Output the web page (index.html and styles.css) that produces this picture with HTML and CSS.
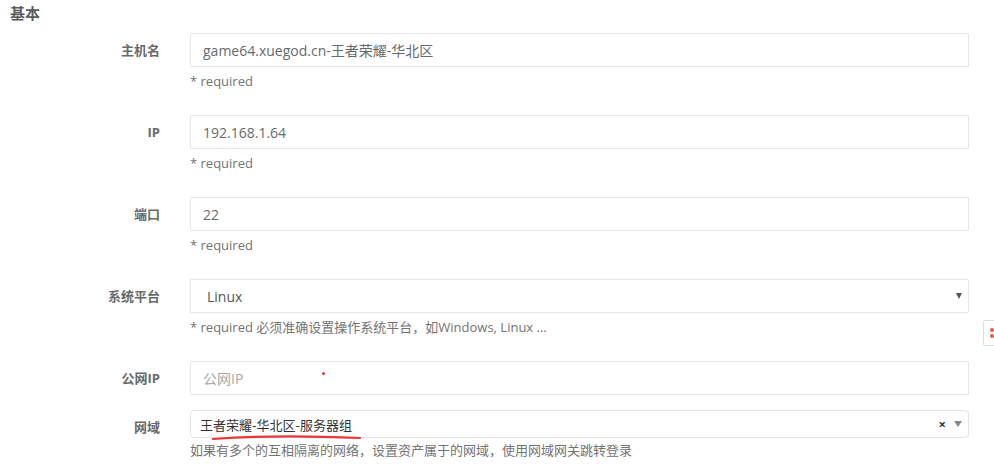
FILE: index.html
```html
<!DOCTYPE html>
<html>
<head>
<meta charset="utf-8">
<link rel="stylesheet" href="styles.css">
</head>
<body>
<div class="page">
  <h3 class="section-title">基本</h3>
  <form class="form">
    <div class="row">
      <label class="label">主机名</label>
      <div class="field">
        <input class="control" value="game64.xuegod.cn-王者荣耀-华北区">
        <div class="help">* required</div>
      </div>
    </div>
    <div class="row">
      <label class="label">IP</label>
      <div class="field">
        <input class="control" value="192.168.1.64">
        <div class="help">* required</div>
      </div>
    </div>
    <div class="row">
      <label class="label">端口</label>
      <div class="field">
        <input class="control" value="22">
        <div class="help">* required</div>
      </div>
    </div>
    <div class="row">
      <label class="label">系统平台</label>
      <div class="field">
        <div class="control select">
          <span class="select-value">Linux</span>
          <span class="caret-sm"></span>
        </div>
        <div class="help">* required 必须准确设置操作系统平台，如Windows, Linux ...</div>
      </div>
    </div>
    <div class="row row-nohelp">
      <label class="label">公网IP</label>
      <div class="field">
        <input class="control" placeholder="公网IP">
      </div>
    </div>
    <div class="row">
      <label class="label">网域</label>
      <div class="field">
        <div class="select2">
          <span class="select2-value">王者荣耀-华北区-服务器组</span>
          <span class="select2-clear">×</span>
          <span class="caret-sm caret-grey"></span>
        </div>
        <div class="help help-tight">如果有多个的互相隔离的网络，设置资产属于的网域，使用网域网关跳转登录</div>
      </div>
    </div>
  </form>
  <svg class="mark-line" width="150" height="8" viewBox="0 0 150 8">
    <path d="M1 5 C 40 2, 100 2, 148 4" stroke="#f0323a" stroke-width="2.2" fill="none" stroke-linecap="round"/>
  </svg>
  <span class="mark-dot"></span>
  <div class="side-tab">
    <span class="side-dot d1"></span>
    <span class="side-dot d2"></span>
  </div>
</div>
</body>
</html>
```
FILE: styles.css
```css
html, body {
  margin: 0;
  padding: 0;
  background: #ffffff;
}
body {
  font-family: "Open Sans", "Noto Sans CJK SC", sans-serif;
  font-size: 13px;
  color: #676a6c;
  overflow: hidden;
}
.page {
  position: relative;
  width: 994px;
  height: 476px;
}
.section-title {
  margin: 0;
  padding: 3px 0 0 10px;
  height: 30px;
  font-size: 15px;
  font-weight: 600;
  color: #5a5d60;
  line-height: 20px;
}
.form {
  display: flex;
  flex-direction: column;
}
.row {
  display: grid;
  grid-template-columns: 160px 779px;
  column-gap: 30px;
  margin-bottom: 15px;
}
.row-nohelp {
  margin-bottom: 15px;
}
.label {
  text-align: right;
  font-weight: 700;
  padding-top: 8px;
  line-height: 18px;
  color: #676a6c;
  font-size: 13px;
}
.field {
  display: flex;
  flex-direction: column;
}
.control {
  box-sizing: border-box;
  height: 34px;
  width: 779px;
  border: 1px solid #e5e6e7;
  border-radius: 1px;
  padding: 6px 12px;
  font-family: "Open Sans", "Noto Sans CJK SC", sans-serif;
  font-size: 14px;
  color: #676a6c;
  background: #fff;
  outline: none;
}
.control::placeholder {
  color: #a8a8a8;
}
.select {
  display: flex;
  align-items: center;
  justify-content: space-between;
  padding-left: 16px;
  padding-right: 6px;
}
.select-value {
  color: #555;
}
.caret-sm {
  width: 0;
  height: 0;
  border-left: 3.5px solid transparent;
  border-right: 3.5px solid transparent;
  border-top: 6px solid #555;
  margin-right: 0;
}
.caret-grey {
  border-left-width: 4.5px;
  border-right-width: 4.5px;
  border-top-width: 6px;
  border-top-color: #888;
}
.help {
  margin-top: 5px;
  margin-bottom: 10px;
  line-height: 18px;
  font-size: 13px;
  color: #737373;
}
.help-tight {
  margin-top: 3px;
}
.select2 {
  box-sizing: border-box;
  height: 28px;
  width: 779px;
  border: 1px solid #e3e3e3;
  border-radius: 4px;
  display: flex;
  align-items: center;
  padding: 0 6px 0 9px;
  background: #fff;
}
.select2-value {
  flex: 1;
  font-size: 13px;
  color: #333;
  font-family: "Noto Sans CJK SC", sans-serif;
}
.select2-clear {
  font-size: 13px;
  font-weight: 700;
  color: #333;
  margin-right: 8px;
  line-height: 1;
}
.mark-line {
  position: absolute;
  left: 212px;
  top: 434px;
}
.mark-dot {
  position: absolute;
  left: 322px;
  top: 372px;
  width: 3px;
  height: 3px;
  border-radius: 50%;
  background: #f0323a;
}
.side-tab {
  position: absolute;
  left: 983px;
  top: 320px;
  width: 16px;
  height: 26px;
  box-sizing: border-box;
  border: 1px solid #ddd;
  border-radius: 2px;
  background: #fff;
}
.side-dot {
  position: absolute;
  left: 6px;
  width: 4px;
  height: 4px;
  border-radius: 50%;
  background: #e8553a;
}
.d1 { top: 7px; }
.d2 { top: 13px; }
```
